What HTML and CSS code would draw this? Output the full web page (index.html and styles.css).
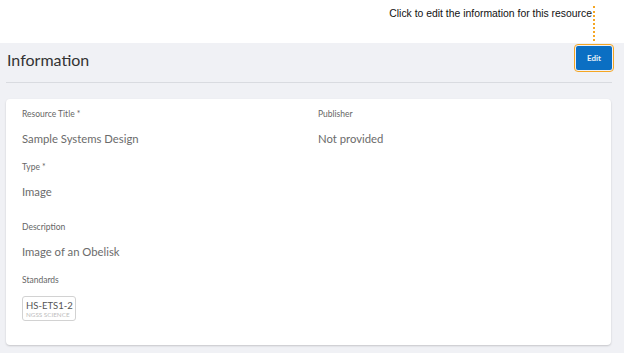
FILE: index.html
```html
<!DOCTYPE html>
<html lang="en">
<head>
    <meta charset="UTF-8">
    <meta name="viewport" content="width=device-width, initial-scale=1.0">
    <title>Information</title>
    <link rel="stylesheet" href="styles.css">
</head>
<body>
    <div class="top-band">
        <div class="hint">
            <span class="hint-text">Click to edit the information for this resource</span>
            <span class="hint-line"></span>
        </div>
    </div>

    <div class="page">
        <div class="header">
            <h1>Information</h1>
            <button class="edit-btn">Edit</button>
        </div>
        <div class="divider"></div>

        <div class="card">
            <div class="col">
                <div class="field">
                    <div class="label">Resource Title *</div>
                    <div class="value">Sample Systems Design</div>
                </div>
                <div class="field field-wide">
                    <div class="label">Type *</div>
                    <div class="value">Image</div>
                </div>
                <div class="field">
                    <div class="label">Description</div>
                    <div class="value">Image of an Obelisk</div>
                </div>
                <div class="field">
                    <div class="label label-std">Standards</div>
                    <div class="badge">
                        <div class="badge-code">HS-ETS1-2</div>
                        <div class="badge-sub">NGSS SCIENCE</div>
                    </div>
                </div>
            </div>
            <div class="col">
                <div class="field">
                    <div class="label">Publisher</div>
                    <div class="value">Not provided</div>
                </div>
            </div>
        </div>
    </div>
</body>
</html>
```

FILE: styles.css
```css
body {
    margin: 0;
    font-family: 'Lato', sans-serif;
    background-color: #f0f1f5;
    height: 353px;
    overflow: hidden;
}

.top-band {
    height: 43px;
    background-color: #fff;
    position: relative;
}

.hint {
    position: absolute;
    right: 29px;
    top: 6px;
    display: flex;
    align-items: flex-start;
}

.hint-text {
    font-family: 'Liberation Sans', Arial, sans-serif;
    font-size: 10.4px;
    color: #111;
    margin-top: 2px;
}

.hint-line {
    width: 0;
    height: 35px;
    border-left: 2px dotted #f5a623;
    margin-left: 1px;
}

.page {
    padding: 0 12px 0 6px;
}

.header {
    display: flex;
    justify-content: space-between;
    align-items: center;
    padding: 2px 0 0 1px;
    height: 26px;
}

h1 {
    margin: 0;
    font-size: 16px;
    font-weight: 400;
    color: #333;
    padding-top: 2px;
}

.edit-btn {
    width: 36px;
    height: 24px;
    border: none;
    border-radius: 2px;
    background-color: #0b6fc3;
    color: #e8f0f8;
    font-family: 'Lato', sans-serif;
    font-size: 8px;
    font-weight: 700;
    outline: 1.5px solid #f5a623;
    outline-offset: 1px;
    padding: 0;
}

.divider {
    height: 1px;
    background-color: #d9dbe0;
    margin-top: 11px;
}

.card {
    margin-top: 16px;
    background-color: #fff;
    border-radius: 4px;
    box-shadow: 0 1px 2px rgba(0, 0, 0, 0.18);
    height: 246px;
    box-sizing: border-box;
    padding: 9px 16px 0;
    display: grid;
    grid-template-columns: 296px 1fr;
    margin-right: 1px;
}

.field {
    margin-bottom: 14px;
}

.field-wide {
    margin-bottom: 21px;
}

.label {
    font-size: 8.5px;
    line-height: 12px;
    color: #666;
    margin-bottom: 11px;
}

.label-std {
    margin-bottom: 10px;
}

.value {
    font-size: 11.3px;
    line-height: 16px;
    color: #6b6b6b;
}

.badge {
    display: inline-block;
    border: 1px solid #d2d2d2;
    border-radius: 3px;
    padding: 3px 0 2px 3px;
    width: 54px;
    box-sizing: border-box;
    white-space: nowrap;
}

.badge-code {
    font-size: 9.5px;
    line-height: 11px;
    color: #555;
}

.badge-sub {
    font-size: 6.3px;
    line-height: 7px;
    color: #bdbdbd;
}
```
